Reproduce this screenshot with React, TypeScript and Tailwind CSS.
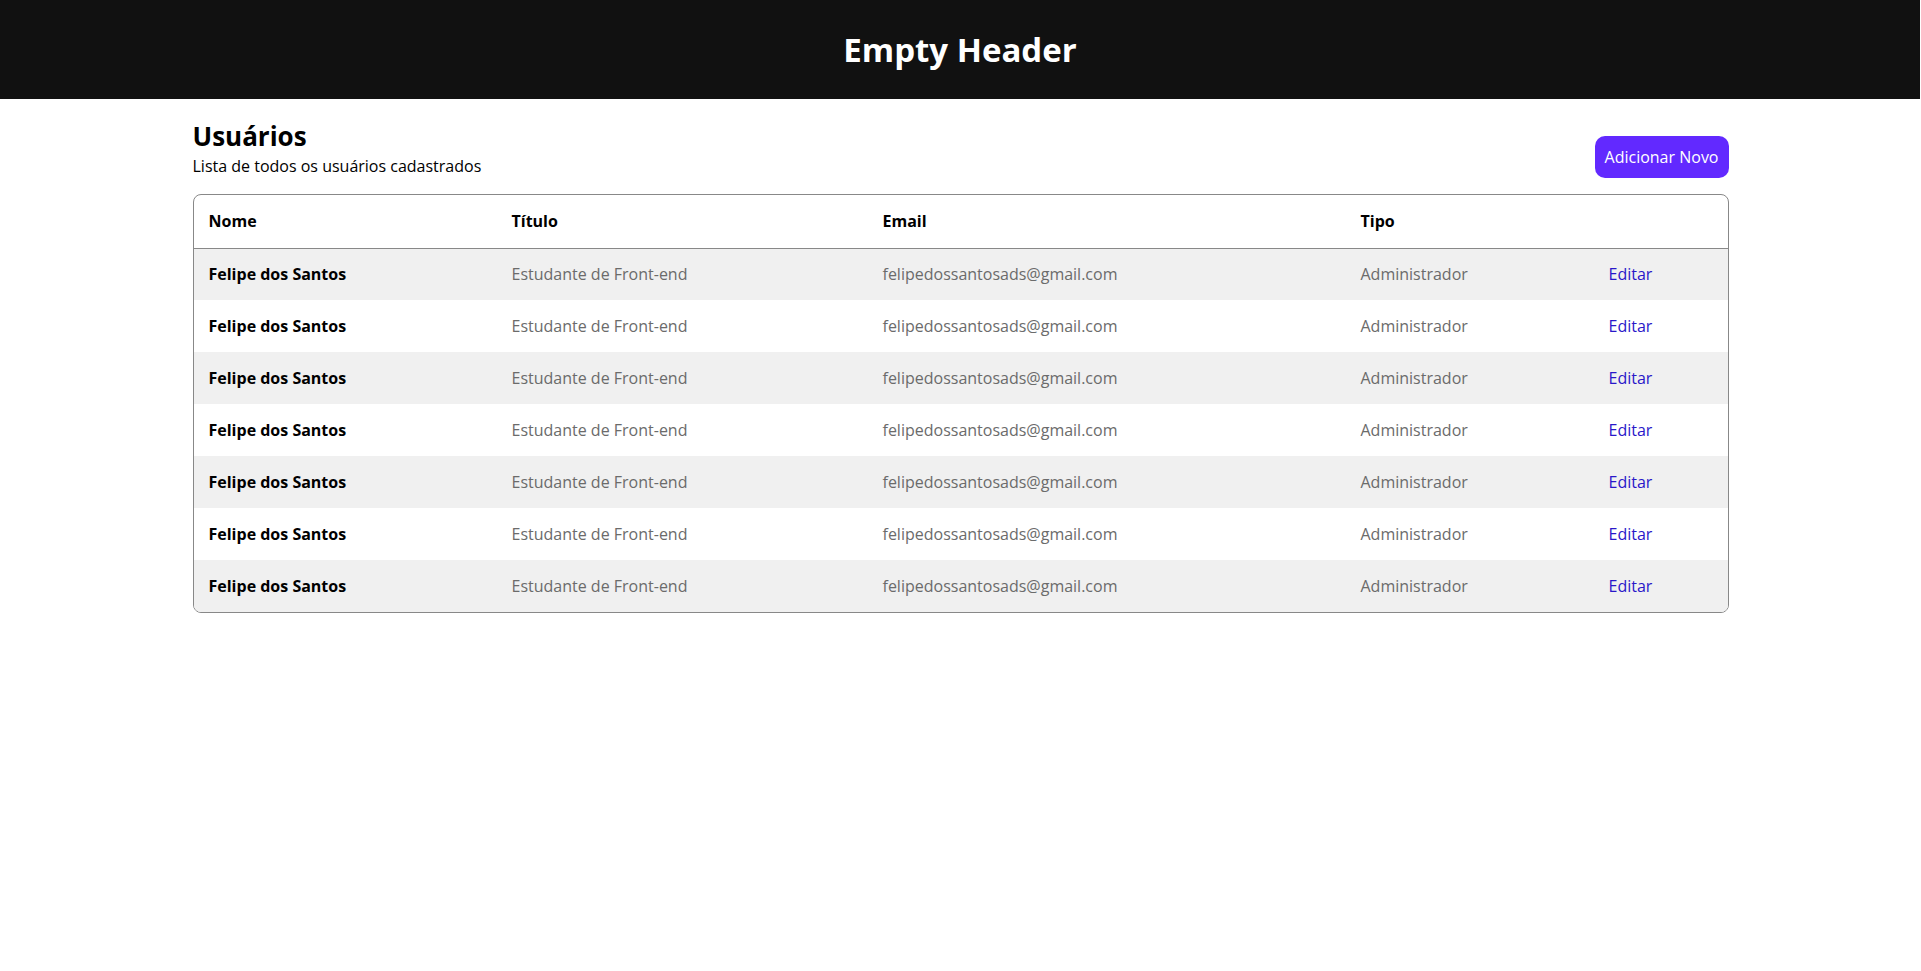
const usuarios = Array.from({ length: 7 }, (_, i) => ({
  id: i + 1,
  nome: 'Felipe dos Santos',
  titulo: 'Estudante de Front-end',
  email: 'felipedossantosads@gmail.com',
  tipo: 'Administrador',
}))

export default function App() {
  return (
    <div className="min-h-screen bg-white font-['Open_Sans',sans-serif] text-black">
      <header className="flex h-[99px] w-[1920px] items-center justify-center bg-[#111111]">
        <h1 className="text-[33px] font-bold text-white">Empty Header</h1>
      </header>

      <main className="mx-auto w-[1536px] pt-5">
        <div className="mb-4 flex items-end justify-between">
          <div>
            <h2 className="text-[26px] leading-[35px] font-bold">Usuários</h2>
            <p className="text-base leading-6">Lista de todos os usuários cadastrados</p>
          </div>
          <button className="h-[42px] rounded-[10px] bg-[#6229ff] px-2.5 text-base text-white">
            Adicionar Novo
          </button>
        </div>

        <div className="overflow-hidden rounded-lg border border-[#888888]">
          <table className="w-full border-collapse text-left text-base">
            <thead>
              <tr className="h-[53px] border-b border-[#888888]">
                <th className="w-[303px] pl-[15px] font-bold">Nome</th>
                <th className="w-[371px] pl-[15px] font-bold">Título</th>
                <th className="w-[478px] pl-[15px] font-bold">Email</th>
                <th className="w-[248px] pl-[15px] font-bold">Tipo</th>
                <th className="pl-[15px]"></th>
              </tr>
            </thead>
            <tbody>
              {usuarios.map((u, i) => (
                <tr key={u.id} className={i % 2 === 0 ? 'h-[52px] bg-[#f0f0f0]' : 'h-[52px] bg-white'}>
                  <td className="pl-[15px] font-bold">{u.nome}</td>
                  <td className="pl-[15px] text-[#6b6b6b]">{u.titulo}</td>
                  <td className="pl-[15px] text-[#6b6b6b]">{u.email}</td>
                  <td className="pl-[15px] text-[#6b6b6b]">{u.tipo}</td>
                  <td className="pl-[15px]">
                    <a href="#" className="text-[#2a17c9]">
                      Editar
                    </a>
                  </td>
                </tr>
              ))}
            </tbody>
          </table>
        </div>
      </main>
    </div>
  )
}
